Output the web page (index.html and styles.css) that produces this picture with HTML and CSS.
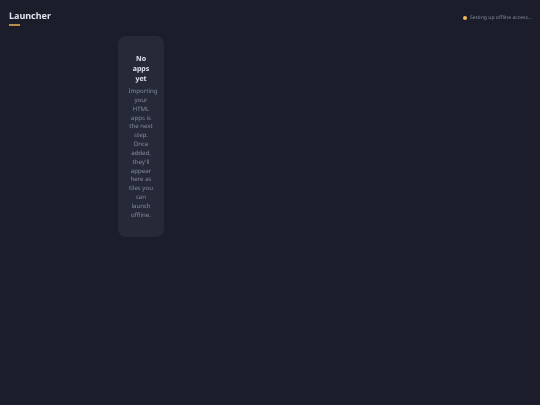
FILE: index.html
```html
<!DOCTYPE html>
<html lang="en">
  <head>
    <meta charset="UTF-8" />
    <meta name="viewport" content="width=device-width, initial-scale=1.0" />
    <title>Launcher</title>
    <link rel="stylesheet" href="styles.css">
  </head>
  <body>
    <header class="topbar">
      <div class="brand">
        <h1>Launcher</h1>
        <div class="brand-line"></div>
      </div>
      <div class="status">
        <span class="status-dot"></span>
        <span>Setting up offline access...</span>
      </div>
    </header>

    <section class="apps">
      <div class="empty">
        <h2>No apps yet</h2>
        <p>Importing your HTML apps is the next step. Once added, they'll appear here as tiles you can launch offline.</p>
      </div>
    </section>
  </body>
</html>
```

FILE: styles.css
```css
* {
  margin: 0;
  padding: 0;
  box-sizing: border-box;
}

body {
  font-family: "Noto Sans", sans-serif;
  text-rendering: geometricPrecision;
  background: #1b1e2a;
  color: #f1f3f9;
  min-height: 405px;
}

.topbar,
.apps {
  will-change: transform;
}

.topbar {
  display: flex;
  justify-content: space-between;
  align-items: flex-start;
  padding: 9px 8px 0 9px;
}

.brand h1 {
  font-size: 9px;
  line-height: 14px;
  font-weight: 700;
  color: #dfe2ec;
}

.brand-line {
  width: 11px;
  height: 2px;
  margin-top: 1px;
  background: #b98d4c;
}

.status {
  display: flex;
  align-items: center;
  gap: 3px;
  margin-top: 3.5px;
  font-size: 5.1px;
  line-height: 10px;
  color: #858a9c;
}

.status-dot {
  width: 4px;
  height: 4px;
  border-radius: 50%;
  background: #f0b85a;
}

.apps {
  padding: 10px 0 0 118px;
}

.empty {
  width: 46px;
  height: 201px;
  padding: 18.5px 10.5px 0;
  background: #252938;
  border-radius: 8px;
  text-align: center;
}

.empty h2 {
  font-size: 7px;
  line-height: 10px;
  font-weight: 700;
  color: #dfe2ec;
  margin-bottom: 2.5px;
}

.empty p {
  font-size: 6.1px;
  line-height: 8.85px;
  color: #858a9c;
}
```
